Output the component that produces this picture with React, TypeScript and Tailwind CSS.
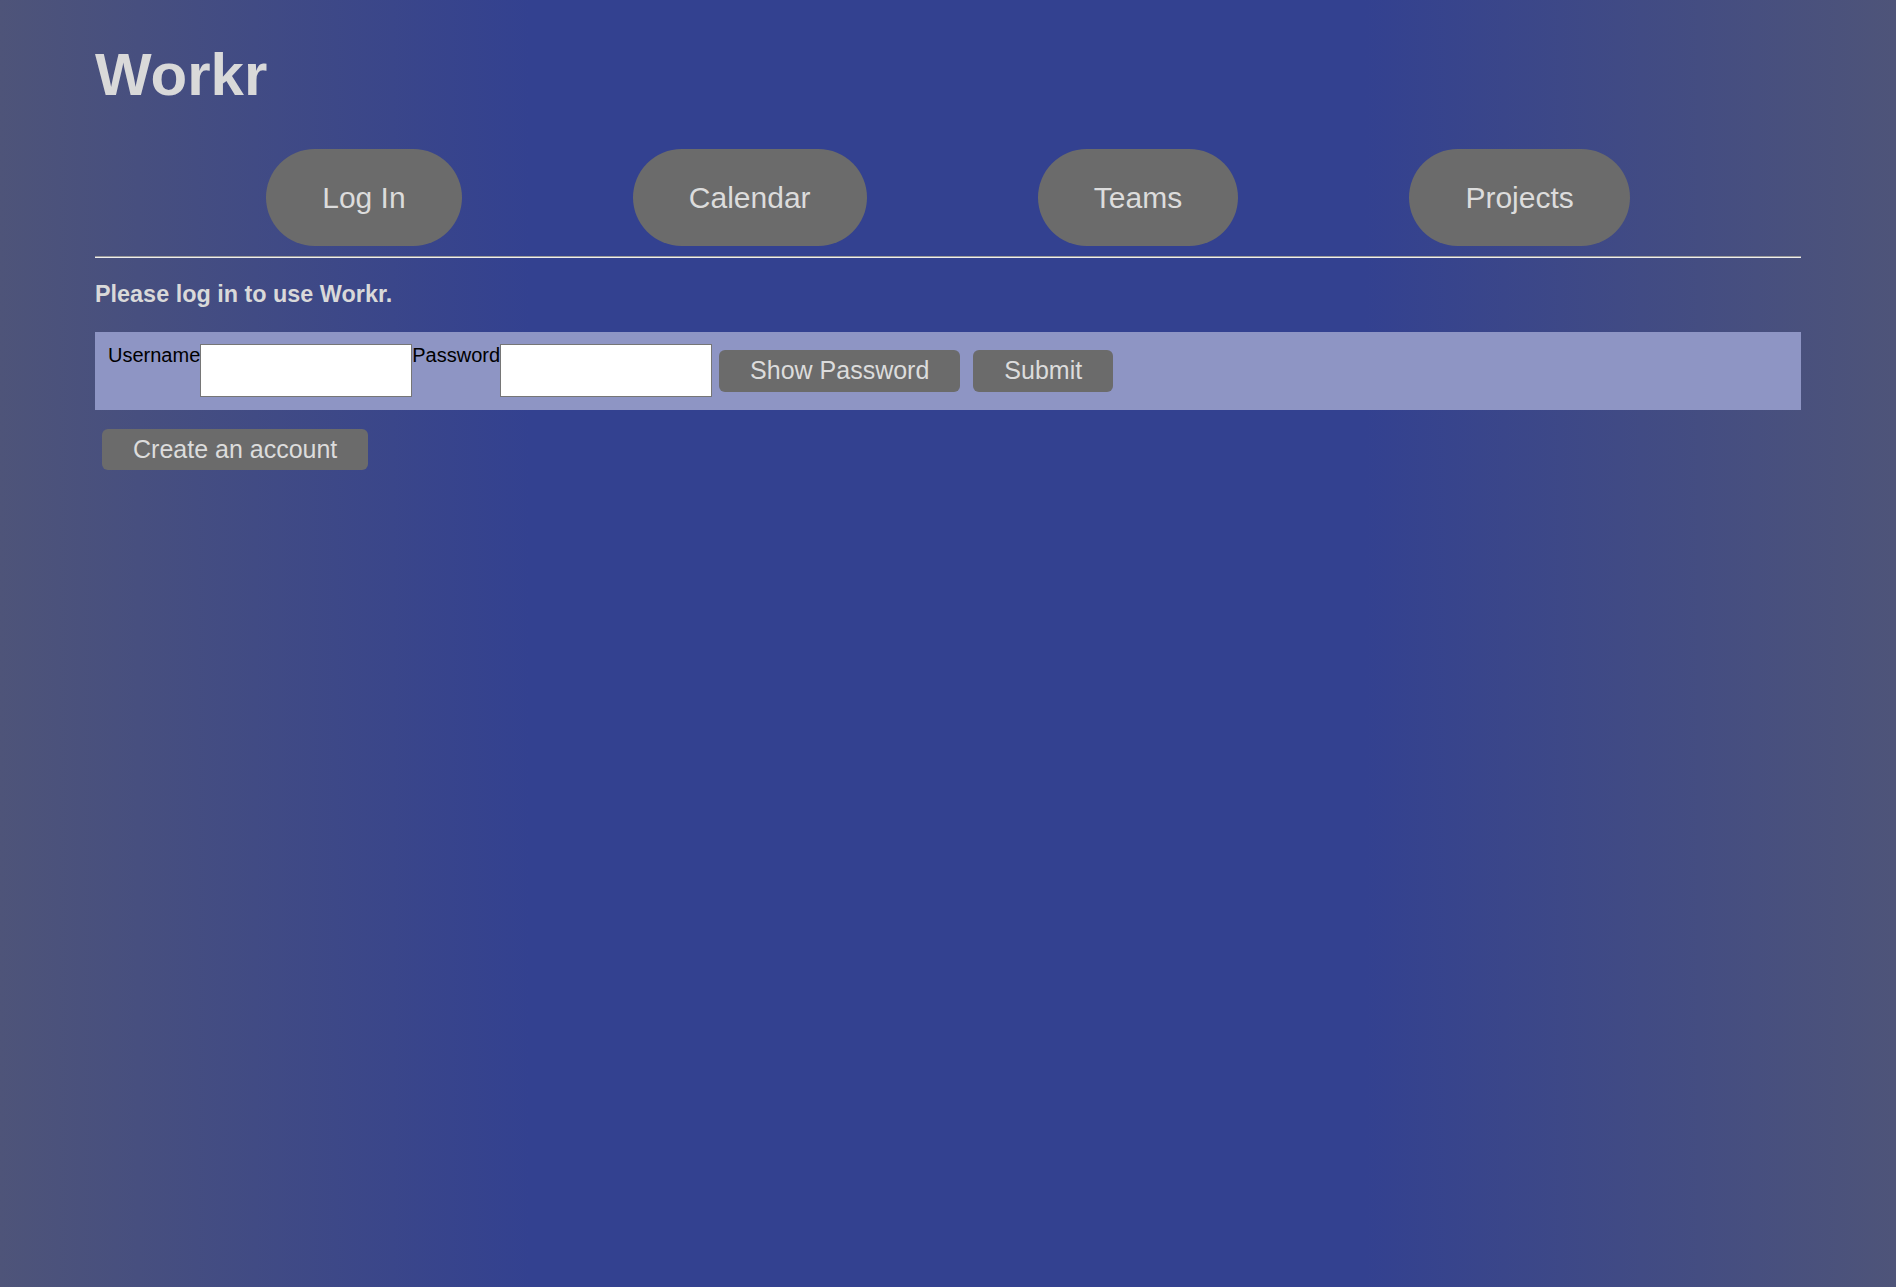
export default function App() {
  const navItems = ['Log In', 'Calendar', 'Teams', 'Projects'];

  return (
    <div className="min-h-screen w-full bg-[linear-gradient(to_right,#4e5479_0%,#334190_28%,#334190_72%,#4e5479_100%)] font-['Liberation_Sans',Arial,sans-serif]">
      <div className="mx-[95px]">
        <h1 className="pt-[40px] pb-[40px] text-[60px] leading-[69px] font-bold text-[#d9d9d9]">Workr</h1>

        <nav className="flex justify-evenly">
          {navItems.map((item) => (
            <button
              key={item}
              className="h-[97px] px-[56px] rounded-full bg-[#6b6b6b] text-[30px] text-[#dcdcdc]"
            >
              {item}
            </button>
          ))}
        </nav>

        <hr className="mt-[10px] border-t border-b border-t-[#9a9a9a] border-b-[#eeeeee]" />

        <p className="mt-[23px] mb-[24px] text-[23.4px] leading-[27px] font-bold text-[#d9d9d9]">
          Please log in to use Workr.
        </p>

        <form className="flex items-start bg-[#8e95c4] pt-[12px] pb-[13px] pl-[13px]">
          <label className="text-[20px] leading-[23px] text-black">Username</label>
          <input type="text" className="w-[212px] h-[53px] bg-white border border-[#767676]" />
          <label className="text-[20px] leading-[23px] text-black">Password</label>
          <input type="password" className="w-[212px] h-[53px] bg-white border border-[#767676]" />
          <button
            type="button"
            className="self-center ml-[7px] h-[42px] px-[31px] rounded-[6px] bg-[#6b6b6b] text-[25px] text-[#dcdcdc]"
          >
            Show Password
          </button>
          <button
            type="button"
            className="self-center ml-[13px] h-[42px] px-[31px] rounded-[6px] bg-[#6b6b6b] text-[25px] text-[#dcdcdc]"
          >
            Submit
          </button>
        </form>

        <button className="mt-[19px] ml-[7px] h-[41px] px-[31px] rounded-[6px] bg-[#6b6b6b] text-[25px] text-[#dcdcdc]">
          Create an account
        </button>
      </div>
    </div>
  );
}
